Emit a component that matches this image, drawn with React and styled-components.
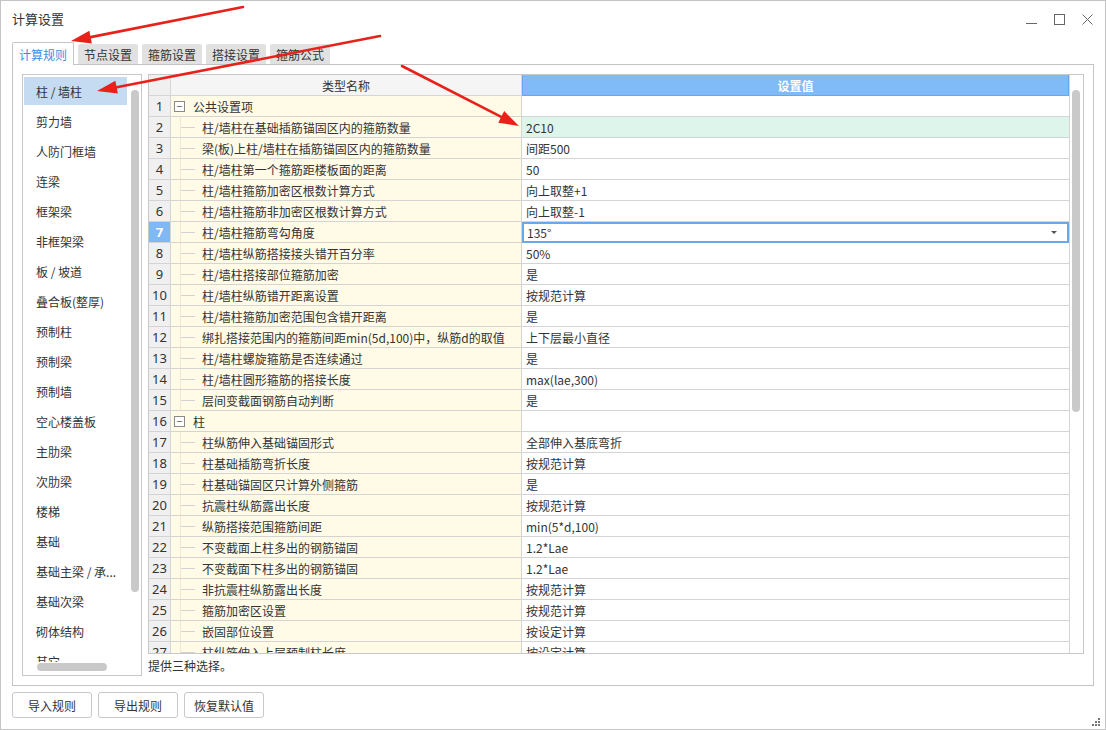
import React from "react";
import styled, { createGlobalStyle } from "styled-components";

const GlobalStyle = createGlobalStyle`
  * { box-sizing: border-box; }
  body {
    margin: 0;
    background: #ffffff;
    font-family: "Noto Sans CJK SC", "Noto Sans", sans-serif;
    color: #333;
  }
`;

const categories = [
  "柱 / 墙柱", "剪力墙", "人防门框墙", "连梁", "框架梁", "非框架梁", "板 / 坡道",
  "叠合板(整厚)", "预制柱", "预制梁", "预制墙", "空心楼盖板", "主肋梁", "次肋梁",
  "楼梯", "基础", "基础主梁 / 承...", "基础次梁", "砌体结构", "其它",
];

const tabs = ["计算规则", "节点设置", "箍筋设置", "搭接设置", "箍筋公式"];

const rows = [
  { group: true, name: "公共设置项", value: "" },
  { name: "柱/墙柱在基础插筋锚固区内的箍筋数量", value: "2C10", tint: true },
  { name: "梁(板)上柱/墙柱在插筋锚固区内的箍筋数量", value: "间距500" },
  { name: "柱/墙柱第一个箍筋距楼板面的距离", value: "50" },
  { name: "柱/墙柱箍筋加密区根数计算方式", value: "向上取整+1" },
  { name: "柱/墙柱箍筋非加密区根数计算方式", value: "向上取整-1" },
  { name: "柱/墙柱箍筋弯勾角度", value: "135°", active: true },
  { name: "柱/墙柱纵筋搭接接头错开百分率", value: "50%" },
  { name: "柱/墙柱搭接部位箍筋加密", value: "是" },
  { name: "柱/墙柱纵筋错开距离设置", value: "按规范计算" },
  { name: "柱/墙柱箍筋加密范围包含错开距离", value: "是" },
  { name: "绑扎搭接范围内的箍筋间距min(5d,100)中，纵筋d的取值", value: "上下层最小直径" },
  { name: "柱/墙柱螺旋箍筋是否连续通过", value: "是" },
  { name: "柱/墙柱圆形箍筋的搭接长度", value: "max(lae,300)" },
  { name: "层间变截面钢筋自动判断", value: "是" },
  { group: true, name: "柱", value: "" },
  { name: "柱纵筋伸入基础锚固形式", value: "全部伸入基底弯折" },
  { name: "柱基础插筋弯折长度", value: "按规范计算" },
  { name: "柱基础锚固区只计算外侧箍筋", value: "是" },
  { name: "抗震柱纵筋露出长度", value: "按规范计算" },
  { name: "纵筋搭接范围箍筋间距", value: "min(5*d,100)" },
  { name: "不变截面上柱多出的钢筋锚固", value: "1.2*Lae" },
  { name: "不变截面下柱多出的钢筋锚固", value: "1.2*Lae" },
  { name: "非抗震柱纵筋露出长度", value: "按规范计算" },
  { name: "箍筋加密区设置", value: "按规范计算" },
  { name: "嵌固部位设置", value: "按设定计算" },
  { name: "柱纵筋伸入上层预制柱长度", value: "按设定计算" },
];

// red annotation arrows: [x1, y1, tipX, tipY]
const arrows = [
  [243, 7, 71, 41],
  [380, 36, 97, 91],
  [402, 66, 519, 126],
];

function arrowHead(x1, y1, x2, y2) {
  const dx = x2 - x1, dy = y2 - y1;
  const len = Math.sqrt(dx * dx + dy * dy);
  const ux = dx / len, uy = dy / len;
  const bx = x2 - ux * 20, by = y2 - uy * 20;
  const px = -uy * 6.5, py = ux * 6.5;
  return {
    points: `${x2},${y2} ${bx + px},${by + py} ${bx - px},${by - py}`,
    bx, by,
  };
}

export default function App() {
  return (
    <>
      <GlobalStyle />
      <Window>
        <TitleBar>
          <Title>计算设置</Title>
          <Controls>
            <svg width="11" height="11" viewBox="0 0 11 11">
              <line x1="0" y1="9.5" x2="11" y2="9.5" stroke="#666" strokeWidth="1" />
            </svg>
            <svg width="11" height="11" viewBox="0 0 11 11">
              <rect x="0.5" y="0.5" width="10" height="10" fill="none" stroke="#666" strokeWidth="1" />
            </svg>
            <svg width="11" height="11" viewBox="0 0 11 11">
              <path d="M0.5 0.5 L10.5 10.5 M10.5 0.5 L0.5 10.5" stroke="#666" strokeWidth="1" />
            </svg>
          </Controls>
        </TitleBar>

        <TabStrip>
          {tabs.map((t, i) => (
            <Tab key={t} $active={i === 0}>{t}</Tab>
          ))}
        </TabStrip>

        <Panel>
          <ListBox>
            <ListViewport>
              {categories.map((c, i) => (
                <ListItem key={c} $selected={i === 0}>{c}</ListItem>
              ))}
            </ListViewport>
            <VThumb $top={15} $height={502} $right={2} />
            <HThumb />
          </ListBox>

          <RightSide>
            <GridBox>
              <Table>
                <HeadRow>
                  <NumHead />
                  <NameHead>类型名称</NameHead>
                  <ValueHead>设置值</ValueHead>
                </HeadRow>
                {rows.map((r, i) => (
                  <Row key={i}>
                    <NumCell $active={r.active}>{i + 1}</NumCell>
                    <NameCell $child={!r.group}>
                      {r.group ? (
                        <>
                          <Toggle>−</Toggle>
                          <GroupText>{r.name}</GroupText>
                        </>
                      ) : (
                        <>
                          <Branch />
                          <span>{r.name}</span>
                        </>
                      )}
                    </NameCell>
                    <ValueCell $tint={r.tint} $active={r.active}>
                      <span>{r.value}</span>
                      {r.active && <Caret />}
                    </ValueCell>
                  </Row>
                ))}
              </Table>
              <ScrollCol>
                <VThumb $top={15} $height={322} $right={3} />
              </ScrollCol>
            </GridBox>
            <Status>提供三种选择。</Status>
          </RightSide>
        </Panel>

        <Footer>
          <Button>导入规则</Button>
          <Button>导出规则</Button>
          <Button>恢复默认值</Button>
        </Footer>

        <Grip>
          <svg width="9" height="9" viewBox="0 0 9 9">
            <rect x="6" y="0" width="2" height="2" fill="#777" />
            <rect x="3" y="3" width="2" height="2" fill="#777" />
            <rect x="6" y="3" width="2" height="2" fill="#777" />
            <rect x="0" y="6" width="2" height="2" fill="#777" />
            <rect x="3" y="6" width="2" height="2" fill="#777" />
            <rect x="6" y="6" width="2" height="2" fill="#777" />
          </svg>
        </Grip>

        <Annotations width="1106" height="730" viewBox="0 0 1106 730">
          {arrows.map(([x1, y1, x2, y2], i) => {
            const h = arrowHead(x1, y1, x2, y2);
            return (
              <g key={i}>
                <line x1={x1} y1={y1} x2={h.bx} y2={h.by} stroke="#e8221b" strokeWidth="2.6" strokeLinecap="round" />
                <polygon points={h.points} fill="#e8221b" />
              </g>
            );
          })}
        </Annotations>
      </Window>
    </>
  );
}

const Window = styled.div`
  position: relative;
  width: 1106px;
  height: 730px;
  border: 1px solid #c4c4c4;
  background: #fff;
  display: flex;
  flex-direction: column;
  font-size: 12px;
  overflow: hidden;
`;

const TitleBar = styled.div`
  height: 41px;
  display: flex;
  align-items: flex-start;
  padding: 9px 12px 0 11px;
`;

const Title = styled.div`
  font-size: 13px;
  line-height: 18px;
  color: #333;
`;

const Controls = styled.div`
  margin-left: auto;
  display: flex;
  gap: 17px;
  padding-top: 4px;
`;

const TabStrip = styled.div`
  display: flex;
  align-items: flex-end;
  gap: 4px;
  height: 22px;
  margin-left: 11px;
  position: relative;
  z-index: 1;
`;

const Tab = styled.div`
  height: ${p => (p.$active ? "23px" : "20px")};
  margin-bottom: ${p => (p.$active ? "-1px" : "0")};
  padding: 0 6px;
  display: flex;
  align-items: center;
  background: ${p => (p.$active ? "#fff" : "#e1e1e1")};
  color: ${p => (p.$active ? "#3c8ce6" : "#333")};
  border: ${p => (p.$active ? "1px solid #c4c4c4" : "none")};
  border-bottom: none;
  border-radius: 2px 2px 0 0;
  font-size: 12px;
  white-space: nowrap;
`;

const Panel = styled.div`
  margin: 0 11px 0 11px;
  height: 622px;
  border: 1px solid #c4c4c4;
  padding: 9px 9px 9px 9px;
  display: flex;
  gap: 6px;
`;

const ListBox = styled.div`
  position: relative;
  width: 120px;
  flex: none;
  border: 1px solid #c8c8c8;
  overflow: hidden;
`;

const ListViewport = styled.div`
  height: 587px;
  overflow: hidden;
  padding: 2px 0 0 1px;
`;

const ListItem = styled.div`
  width: 103px;
  height: 28px;
  margin-bottom: 2px;
  padding-left: 12px;
  display: flex;
  align-items: center;
  background: ${p => (p.$selected ? "#c4dbf1" : "transparent")};
  white-space: nowrap;
  overflow: hidden;
  font-size: 12px;
  color: #333;
`;

const VThumb = styled.div`
  position: absolute;
  top: ${p => p.$top}px;
  right: ${p => p.$right}px;
  width: 8px;
  height: ${p => p.$height}px;
  border-radius: 4px;
  background: #c9c9c9;
`;

const HThumb = styled.div`
  position: absolute;
  left: 14px;
  bottom: 4px;
  width: 70px;
  height: 8px;
  border-radius: 4px;
  background: #c9c9c9;
`;

const RightSide = styled.div`
  flex: 1;
  display: flex;
  flex-direction: column;
`;

const GridBox = styled.div`
  width: 936px;
  height: 580px;
  border: 1px solid #c8c8c8;
  display: flex;
  overflow: hidden;
`;

const Table = styled.div`
  width: 920px;
  display: flex;
  flex-direction: column;
`;

const Row = styled.div`
  display: grid;
  grid-template-columns: 22px 351px 547px;
  height: 21px;
  flex: none;
`;

const HeadRow = styled(Row)`
  height: 21px;
`;

const NumHead = styled.div`
  background: #f0f0f0;
  border-right: 1px solid #d6d6d6;
  border-bottom: 1px solid #d6d6d6;
`;

const NameHead = styled.div`
  background: #f5f5f5;
  border-right: 1px solid #d6d6d6;
  border-bottom: 1px solid #d6d6d6;
  display: flex;
  align-items: center;
  justify-content: center;
  font-size: 12px;
  color: #333;
`;

const ValueHead = styled.div`
  background: #80bbf7;
  border: 1px solid #6aa7ea;
  border-top: none;
  display: flex;
  align-items: center;
  justify-content: center;
  color: #fff;
  font-weight: 600;
  font-size: 12px;
`;

const NumCell = styled.div`
  background: ${p => (p.$active ? "#80b8f3" : "#f0f0f0")};
  color: ${p => (p.$active ? "#fff" : "#333")};
  font-weight: ${p => (p.$active ? 700 : 400)};
  border-right: 1px solid #d4d4d4;
  border-bottom: 1px solid #d4d4d4;
  display: flex;
  align-items: center;
  justify-content: center;
  font-size: 13px;
  font-family: "Noto Sans", "Noto Sans CJK SC", sans-serif;
`;

const NameCell = styled.div`
  position: relative;
  background: #fffbe7;
  border-right: 1px solid #d4d4d4;
  border-bottom: 1px solid #d4d4d4;
  display: flex;
  align-items: center;
  padding-left: ${p => (p.$child ? "9px" : "3px")};
  white-space: nowrap;
  overflow: hidden;
  font-size: 12px;
  color: #333;

  ${p => p.$child && `
    &::before {
      content: "";
      position: absolute;
      left: 9px;
      top: -1px;
      bottom: -1px;
      width: 1px;
      background: #ece8d4;
    }
  `}
`;

const Toggle = styled.span`
  width: 11px;
  height: 11px;
  border: 1px solid #8a8a8a;
  display: inline-flex;
  align-items: center;
  justify-content: center;
  font-size: 10px;
  line-height: 1;
  color: #444;
  background: #fff;
`;

const GroupText = styled.span`
  margin-left: 8px;
`;

const Branch = styled.span`
  width: 15px;
  height: 1px;
  background: #d2d2d2;
  margin-right: 7px;
  flex: none;
`;

const ValueCell = styled.div`
  position: relative;
  background: ${p => (p.$tint ? "#ddf5ea" : "#fff")};
  border-bottom: 1px solid #d4d4d4;
  border: ${p => (p.$active ? "2px solid #6aa8ec" : undefined)};
  display: flex;
  align-items: center;
  padding-left: ${p => (p.$active ? "3px" : "4px")};
  padding-right: 10px;
  font-size: 12px;
  color: #333;
  white-space: nowrap;
`;

const Caret = styled.span`
  margin-left: auto;
  width: 0;
  height: 0;
  border-left: 3px solid transparent;
  border-right: 3px solid transparent;
  border-top: 3px solid #555;
`;

const ScrollCol = styled.div`
  position: relative;
  flex: 1;
  border-left: 1px solid #d4d4d4;
`;

const Status = styled.div`
  margin-top: 4px;
  font-size: 12px;
  line-height: 16px;
  color: #333;
`;

const Footer = styled.div`
  display: flex;
  gap: 6px;
  padding: 6px 0 0 11px;
`;

const Button = styled.button`
  width: 80px;
  height: 26px;
  border: 1px solid #c8c8c8;
  border-radius: 3px;
  background: #fff;
  font-family: "Noto Sans CJK SC", "Noto Sans", sans-serif;
  font-size: 12px;
  color: #333;
  padding: 0;
`;

const Grip = styled.div`
  position: absolute;
  right: 4px;
  bottom: 2px;
  line-height: 0;
`;

const Annotations = styled.svg`
  position: absolute;
  left: -1px;
  top: -1px;
  z-index: 10;
  pointer-events: none;
`;
